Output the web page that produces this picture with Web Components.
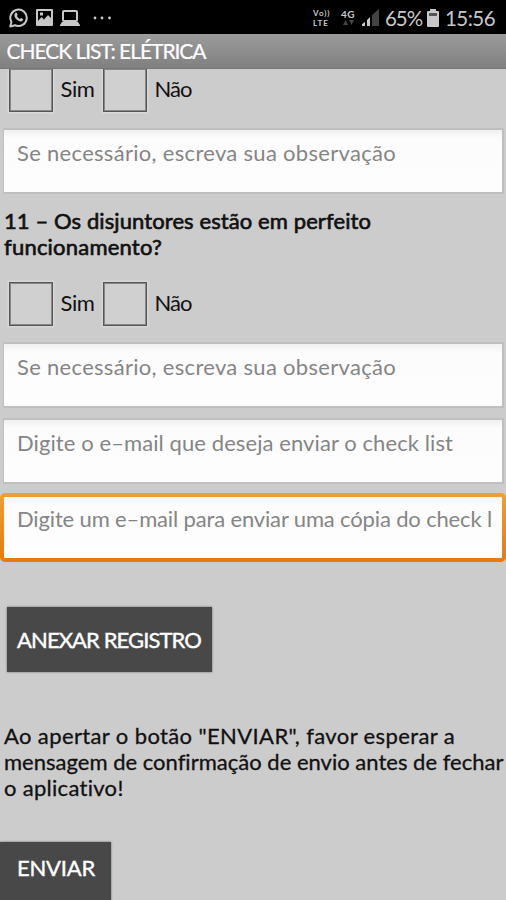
<!DOCTYPE html>
<html lang="pt-BR">
<head>
<meta charset="utf-8">
<title>Check List: Elétrica</title>
<style>
html,body{margin:0;height:900px;overflow:hidden;background:#ccc}
body{font-family:Lato,"Open Sans",sans-serif;font-size:22px;line-height:26px;color:#111}
</style>
</head>
<body>
<check-app></check-app>
<script>
const define=(name,html,init)=>{
  const t=document.createElement('template');t.innerHTML=html;
  customElements.define(name,class extends HTMLElement{
    constructor(){super();this.attachShadow({mode:'open'}).append(t.content.cloneNode(true));}
    connectedCallback(){if(init)init(this,this.shadowRoot);}
  });
};

/* One line of lettering, tracked so that it fills the width in "w". */
define('text-line',`<style>:host{display:block;white-space:pre;height:26px}span{display:inline-block}</style><span><slot></slot></span>`,(el,root)=>{
  const s=root.querySelector('span'),w=+el.getAttribute('w');
  const n=[...el.textContent].length;
  s.style.letterSpacing='0px';
  s.style.letterSpacing=((w-s.getBoundingClientRect().width)/n).toFixed(3)+'px';
});

define('status-bar',`<style>
:host{display:flex;height:34px;background:#000;color:#c8c8c8;align-items:center;padding:1px 11px 0 9px;box-sizing:border-box}
svg{display:block;flex:none}
.gap{flex:1}
.tiny{font-size:8px;line-height:10px;font-weight:700}
.tiny text-line{height:10px}
.big{font-size:20.500px}
</style>
<svg width="19" height="20" viewBox="0 0 19 20"><path d="M1.2 18.5 2.5 14A8.2 8.2 0 1 1 6 17.2Z" fill="none" stroke="#c8c8c8" stroke-width="2" stroke-linejoin="round"/><path d="M6 5.2q1.2-1.2 2 0l.7 1.7-.9 1.2q1 2.100 3 2.900l1.200-1.100 2 1q.6.6-.3 1.700-1.500 1.500-4 .4Q6.700 11.600 5.500 8.500 5 6.200 6 5.200Z" fill="#c8c8c8"/></svg>
<svg style="margin-left:8px" width="17" height="17" viewBox="0 0 17 17"><path fill="#c8c8c8" fill-rule="evenodd" d="M0 1Q0 0 1 0H16Q17 0 17 1V16Q17 17 16 17H1Q0 17 0 16ZM2 2V12L5.500 8 8 10.500 12 6 15 9V2ZM4 3.500H7V6.500H4Z"/></svg>
<svg style="margin-left:7px" width="20" height="16" viewBox="0 0 20 16"><rect x="3" y="1" width="14" height="10" rx="1" fill="none" stroke="#c8c8c8" stroke-width="2"/><path d="M2 12H18L20 15V16H0V15Z" fill="#c8c8c8"/></svg>
<svg style="margin-left:13px" width="18" height="4" viewBox="0 0 18 4"><g fill="#c8c8c8"><circle cx="2" cy="2" r="1.400"/><circle cx="9" cy="2" r="1.400"/><circle cx="16.500" cy="2" r="1.400"/></g></svg>
<div class="gap"></div>
<div class="tiny" style="width:17px;margin-right:11px"><text-line w="17.500">Vo))</text-line><text-line w="16">LTE</text-line></div>
<div style="width:14px;height:18px;margin-right:7px"><div class="tiny" style="font-size:10px"><text-line w="14">4G</text-line></div><svg width="14" height="7" viewBox="0 0 14 7"><path d="M2 6 4.500 1 7 6ZM8 1H13L10.500 6Z" fill="#444"/></svg></div>
<svg style="margin-right:6px" width="17" height="17" viewBox="0 0 17 17"><path d="M0 17V15L3 13V17ZM5 17V11L8 8V17Z" fill="#c8c8c8"/><path d="M10 17V6L17 0V17Z" fill="#444"/></svg>
<text-line class="big" w="37" style="width:37px;margin-right:5px">65%</text-line>
<svg style="margin-right:6px" width="12" height="18" viewBox="0 0 12 18"><path d="M3 2V0H9V2H11Q12 2 12 3V17Q12 18 11 18H1Q0 18 0 17V3Q0 2 1 2Z" fill="#c8c8c8"/><path d="M2 4H10V7H2Z" fill="#555"/></svg>
<text-line class="big" w="50" style="width:50px">15:56</text-line>`);

define('title-bar',`<style>:host{display:block;height:35px;box-sizing:border-box;padding:3.500px 0 0 6.500px;background:linear-gradient(#9b9b9b,#808080);border-bottom:1px solid #777;color:#fff;font-size:21px;-webkit-text-stroke:.2px #fff}</style><slot></slot>`);

define('check-box',`<style>:host{display:block;box-sizing:border-box;width:44px;height:44px;border:1.500px solid #555;outline:.5px solid #888;outline-offset:-2px;background:#d0d0d0;box-shadow:0 0 2px 1px #ddd}</style>`);

define('choice-row',`<style>
:host{display:flex;height:44px;padding-left:9px}
text-line{margin-top:7.500px}
.a{margin-left:7.500px;width:42px}.b{margin-left:8px}
</style><check-box></check-box><text-line class="a" w="34">Sim</text-line><check-box></check-box><text-line class="b" w="37">Não</text-line>`);

define('text-field',`<style>
:host{display:block;box-sizing:border-box;height:66px;margin:0 2px 0 3px;border:2px solid #bfbfbf;border-left-width:1.500px;background:linear-gradient(#f0f0f0,#fcfcfc 8px,#fdfdfd);color:#858585;padding:10px 0 0 13px;overflow:hidden}
:host([focused]){height:69px;margin:0;border:4px solid;border-color:transparent;border-radius:5px;padding:9px 0 0 13px;background:linear-gradient(#f4f4f4,#fcfcfc 8px,#fefefe) padding-box,linear-gradient(#eea030,#e67a10) border-box}
</style><slot></slot>`);

define('push-button',`<style>:host{display:block;box-sizing:border-box;background:#484848;color:#fff;-webkit-text-stroke:.4px #fff;box-shadow:0 0 2px #666}</style><slot></slot>`);

define('check-app',`<style>
:host{display:flex;flex-direction:column;height:900px;overflow:hidden}
status-bar,title-bar,main{flex:none}
main{display:flex;flex-direction:column}
.q,.note{padding-left:4px}
.q{margin-top:14px;-webkit-text-stroke:.65px #111}
.note{margin-top:50.500px;-webkit-text-stroke:.3px #111}
.clip{height:43px;overflow:hidden;display:flex;align-items:flex-end;padding-bottom:3px;box-sizing:content-box}
.attach{width:205px;height:65px;margin:45px 0 0 7px;padding:19.500px 0 0 10px}
.send{width:111px;height:65px;margin-top:41px;padding:13px 0 0 17px}
</style>
<status-bar></status-bar>
<title-bar><text-line w="199">CHECK LIST: ELÉTRICA</text-line></title-bar>
<main>
<div class="clip"><choice-row></choice-row></div>
<text-field style="margin-top:13px"><text-line w="379">Se necessário, escreva sua observação</text-line></text-field>
<div class="q"><text-line w="367">11 – Os disjuntores estão em perfeito</text-line><text-line w="158">funcionamento?</text-line></div>
<choice-row style="margin-top:22px"></choice-row>
<text-field style="margin-top:16px"><text-line w="379">Se necessário, escreva sua observação</text-line></text-field>
<text-field style="margin-top:10px"><text-line w="436">Digite o e–mail que deseja enviar o check list</text-line></text-field>
<text-field focused style="margin-top:9px"><text-line w="475">Digite um e–mail para enviar uma cópia do check l</text-line></text-field>
<push-button class="attach"><text-line w="184">ANEXAR REGISTRO</text-line></push-button>
<div class="note"><text-line w="451">Ao apertar o botão "ENVIAR", favor esperar a</text-line><text-line w="499">mensagem de confirmação de envio antes de fechar</text-line><text-line w="120">o aplicativo!</text-line></div>
<push-button class="send"><text-line w="78">ENVIAR</text-line></push-button>
</main>`);
</script>
</body>
</html>
